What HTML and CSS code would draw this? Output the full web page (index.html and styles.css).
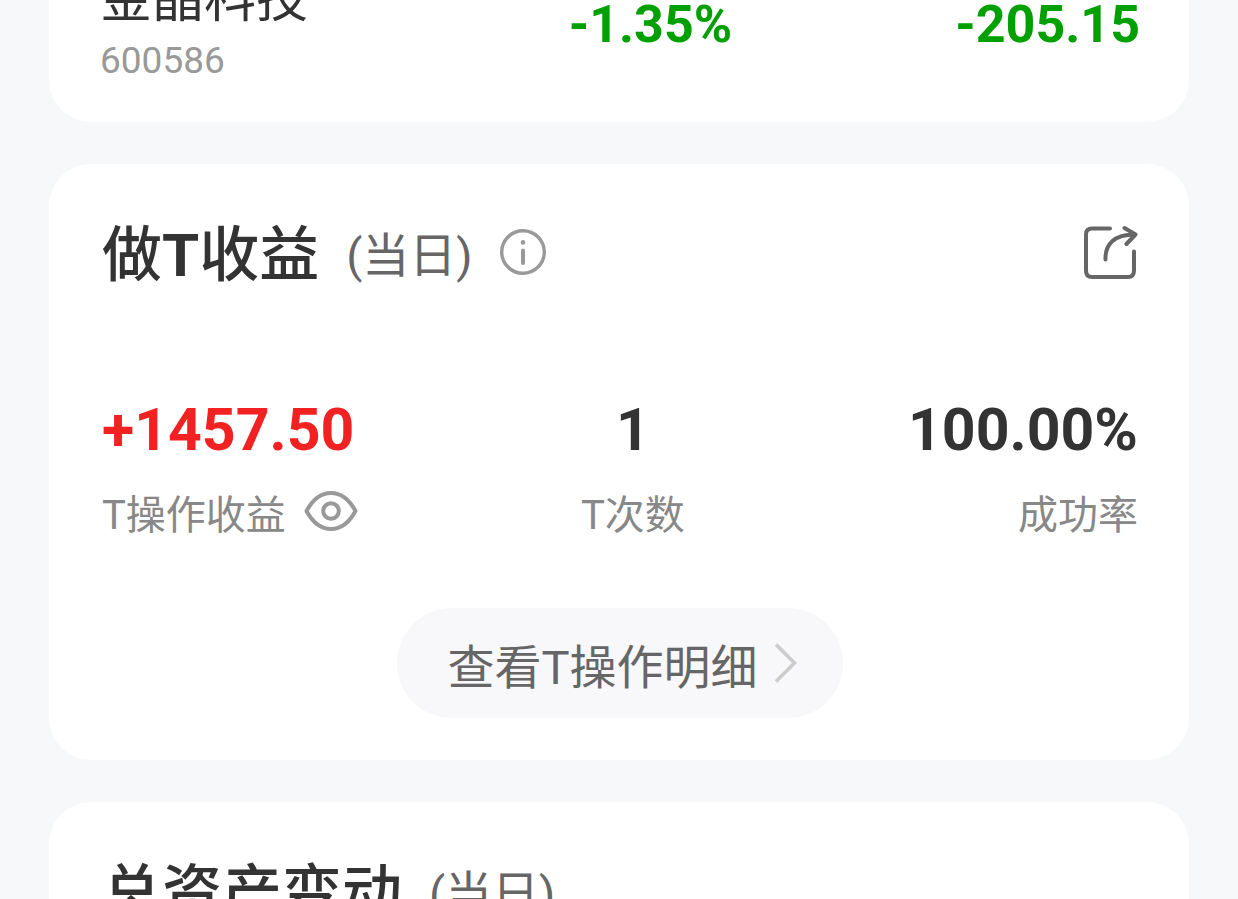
FILE: index.html
```html
<!DOCTYPE html>
<html lang="zh-CN">
<head>
<meta charset="utf-8">
<meta name="viewport" content="width=device-width, initial-scale=1">
<title>做T收益</title>
<link rel="stylesheet" href="styles.css">
</head>
<body>
<main class="feed">
  <section class="card holding">
    <div class="stock">
      <span class="stock-name">金晶科技</span>
      <span class="stock-code">600586</span>
    </div>
    <span class="change">-1.35%</span>
    <span class="change">-205.15</span>
  </section>

  <section class="card">
    <header class="card-head">
      <h2 class="title">做<b>T</b>收益</h2>
      <span class="period">(当日)</span>
      <button class="icon-button" type="button" aria-label="说明">
        <svg width="48" height="48" viewBox="0 0 48 48" fill="none" stroke="#999" stroke-linecap="round">
          <circle cx="24" cy="24" r="21.3" stroke-width="3.4"/>
          <path d="M24 22.6V35" stroke-width="4"/>
          <circle cx="24" cy="14.4" r="2.3" fill="#999" stroke="none"/>
        </svg>
      </button>
      <button class="icon-button share" type="button" aria-label="分享">
        <svg width="56" height="56" viewBox="0 0 56 56" fill="none" stroke="#666" stroke-width="4" stroke-linecap="round" stroke-linejoin="round">
          <path d="M28 4.500H10Q4 4.500 4 10.500V46.500Q4 53 10 53H46Q52 53 52 46.500V27.500"/>
          <path d="M23.500 35.500C23 20 32 10.500 53 10.500"/>
          <path d="M42.500 4L53.500 10.500L44.500 20"/>
        </svg>
      </button>
    </header>

    <div class="stats">
      <div class="stat">
        <span class="value gain">+1457.50</span>
        <span class="label">T操作收益
          <button class="icon-button" type="button" aria-label="隐藏金额">
            <svg width="54" height="42" viewBox="0 0 54 42" fill="none" stroke="#999" stroke-width="4" stroke-linejoin="round">
              <path d="M2.500 21C9 9 17 3 27 3S45 9 51.500 21C45 33 37 39 27 39S9 33 2.500 21Z"/>
              <circle cx="27" cy="21" r="7.800"/>
            </svg>
          </button>
        </span>
      </div>
      <div class="stat center">
        <span class="value">1</span>
        <span class="label">T次数</span>
      </div>
      <div class="stat end">
        <span class="value">100.00%</span>
        <span class="label">成功率</span>
      </div>
    </div>

    <button class="detail" type="button">查看T操作明细
      <svg width="24" height="40" viewBox="0 0 24 40" fill="none" stroke="#ccc" stroke-width="3.600">
        <path d="M2 1.500L20.500 20L2 38.500"/>
      </svg>
    </button>
  </section>

  <section class="card">
    <header class="card-head">
      <h2 class="title">总资产变动</h2>
      <span class="period">(当日)</span>
    </header>
  </section>
</main>
</body>
</html>
```
FILE: styles.css
```css
* {
  box-sizing: border-box;
}

body {
  margin: 0;
  height: 100vh;
  overflow: hidden;
  background: #f6f8fa;
  color: #333;
  font-family: Roboto, "Noto Sans CJK SC", sans-serif;
}

button {
  border: 0;
  padding: 0;
  background: none;
  color: inherit;
  font: inherit;
  cursor: pointer;
}

svg {
  display: block;
}

/* The list is scrolled part of the way past its first row. */
.feed {
  display: flex;
  flex-direction: column;
  gap: 42px;
  margin-top: -82px;
  padding: 0 49px;
}

.card {
  padding: 50px 51px 42px 53px;
  border-radius: 42px;
  background: #fff;
}

.holding {
  display: grid;
  grid-template-columns: 11fr 20fr 20fr;
  align-items: start;
  padding: 50px 49px 37px 51px;
}

.stock {
  display: flex;
  flex-direction: column;
  gap: 5px;
  white-space: nowrap;
}

.stock-name {
  font-size: 52px;
  line-height: 64px;
}

.stock-code {
  color: #999;
  font-size: 37px;
  line-height: 48px;
}

.change {
  color: #00a000;
  font-size: 52px;
  font-weight: 700;
  line-height: 114px;
  text-align: right;
}

.card-head {
  display: flex;
  align-items: flex-start;
  height: 84px;
}

.title {
  margin: 0;
  font-size: 60px;
  font-weight: 500;
  line-height: 84px;
}

.title b {
  font-weight: 700;
}

.period {
  margin: 0 26px 0 27px;
  color: #666;
  font-size: 47px;
  line-height: 84px;
}

.icon-button {
  display: flex;
  flex: none;
  align-items: center;
}

.card-head .icon-button {
  height: 76px;
}

.share {
  margin-left: auto;
}

.stats {
  display: flex;
  justify-content: space-between;
  margin-top: 96px;
}

.stat {
  display: flex;
  flex-direction: column;
  gap: 20px;
}

.center {
  align-items: center;
}

.end {
  align-items: flex-end;
}

.value {
  font-size: 59px;
  font-weight: 700;
  line-height: 72px;
}

.gain {
  color: #f22222;
}

.label {
  display: flex;
  align-items: flex-start;
  gap: 18px;
  height: 60px;
  color: #888;
  font-size: 40px;
  line-height: 60px;
}

.label .icon-button {
  height: 50px;
}

.detail {
  display: flex;
  align-items: center;
  gap: 16px;
  height: 110px;
  margin: 62px auto 0;
  padding: 0 45px 0 50px;
  border-radius: 55px;
  background: #f8f8fa;
  color: #666;
  font-size: 47px;
}
```
